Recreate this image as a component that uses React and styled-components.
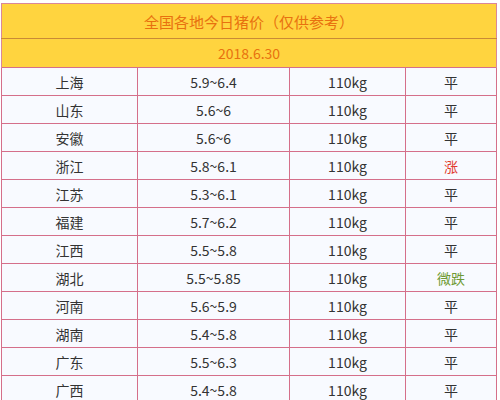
import React from 'react'
import styled, { createGlobalStyle } from 'styled-components'

const GlobalStyle = createGlobalStyle`
    html, body {
        margin: 0;
        padding: 0;
        background: #ffffff;
    }
    body {
        font-family: 'Noto Sans CJK SC', 'Noto Sans', sans-serif;
    }
`

const columns = [136, 152, 116, 91]

const rows = [
    ['上海', '5.9~6.4', '110kg', '平'],
    ['山东', '5.6~6', '110kg', '平'],
    ['安徽', '5.6~6', '110kg', '平'],
    ['浙江', '5.8~6.1', '110kg', '涨'],
    ['江苏', '5.3~6.1', '110kg', '平'],
    ['福建', '5.7~6.2', '110kg', '平'],
    ['江西', '5.5~5.8', '110kg', '平'],
    ['湖北', '5.5~5.85', '110kg', '微跌'],
    ['河南', '5.6~5.9', '110kg', '平'],
    ['湖南', '5.4~5.8', '110kg', '平'],
    ['广东', '5.5~6.3', '110kg', '平'],
    ['广西', '5.4~5.8', '110kg', '平'],
]

const trendColor = (t) => {
    if (t === '涨') return '#e23a2e'
    if (t === '微跌') return '#6f9a35'
    return '#333333'
}

const App = () => {
    return (
        <>
            <GlobalStyle />
            <Page>
                <PriceTable>
                    <colgroup>
                        {columns.map((w, i) => (
                            <Col key={i} $w={w} />
                        ))}
                    </colgroup>
                    <thead>
                        <TitleRow>
                            <th colSpan={4}>全国各地今日猪价（仅供参考）</th>
                        </TitleRow>
                        <DateRow>
                            <th colSpan={4}>2018.6.30</th>
                        </DateRow>
                    </thead>
                    <tbody>
                        {rows.map((r) => (
                            <BodyRow key={r[0]}>
                                <td>{r[0]}</td>
                                <td>{r[1]}</td>
                                <td>{r[2]}</td>
                                <Trend $color={trendColor(r[3])}>{r[3]}</Trend>
                            </BodyRow>
                        ))}
                    </tbody>
                </PriceTable>
            </Page>
        </>
    )
}

export default App

const Page = styled.div`
    width: 500px;
    height: 400px;
    overflow: hidden;
    padding: 3px 0 0 1px;
    box-sizing: border-box;
`

const PriceTable = styled.table`
    width: 496px;
    border-collapse: collapse;
    table-layout: fixed;
    border: 1px solid #d9879a;

    th {
        background: #ffd43f;
        color: #e8710f;
        font-weight: 400;
        text-align: center;
        padding: 0;
        border-left: 1px solid #d9879a;
        border-right: 1px solid #d9879a;
    }
`

const Col = styled.col`
    width: ${(p) => p.$w}px;
`

const TitleRow = styled.tr`
    th {
        height: 34px;
        font-size: 15px;
        border-bottom: 1px solid #c98a36;
    }
`

const DateRow = styled.tr`
    th {
        height: 28px;
        font-size: 14px;
    }
`

const BodyRow = styled.tr`
    td {
        height: 27px;
        padding: 0;
        text-align: center;
        font-size: 14px;
        color: #333333;
        background: #f8faff;
        border: 1px solid #d56f8a;
    }
`

const Trend = styled.td`
    && {
        color: ${(p) => p.$color};
    }
`
